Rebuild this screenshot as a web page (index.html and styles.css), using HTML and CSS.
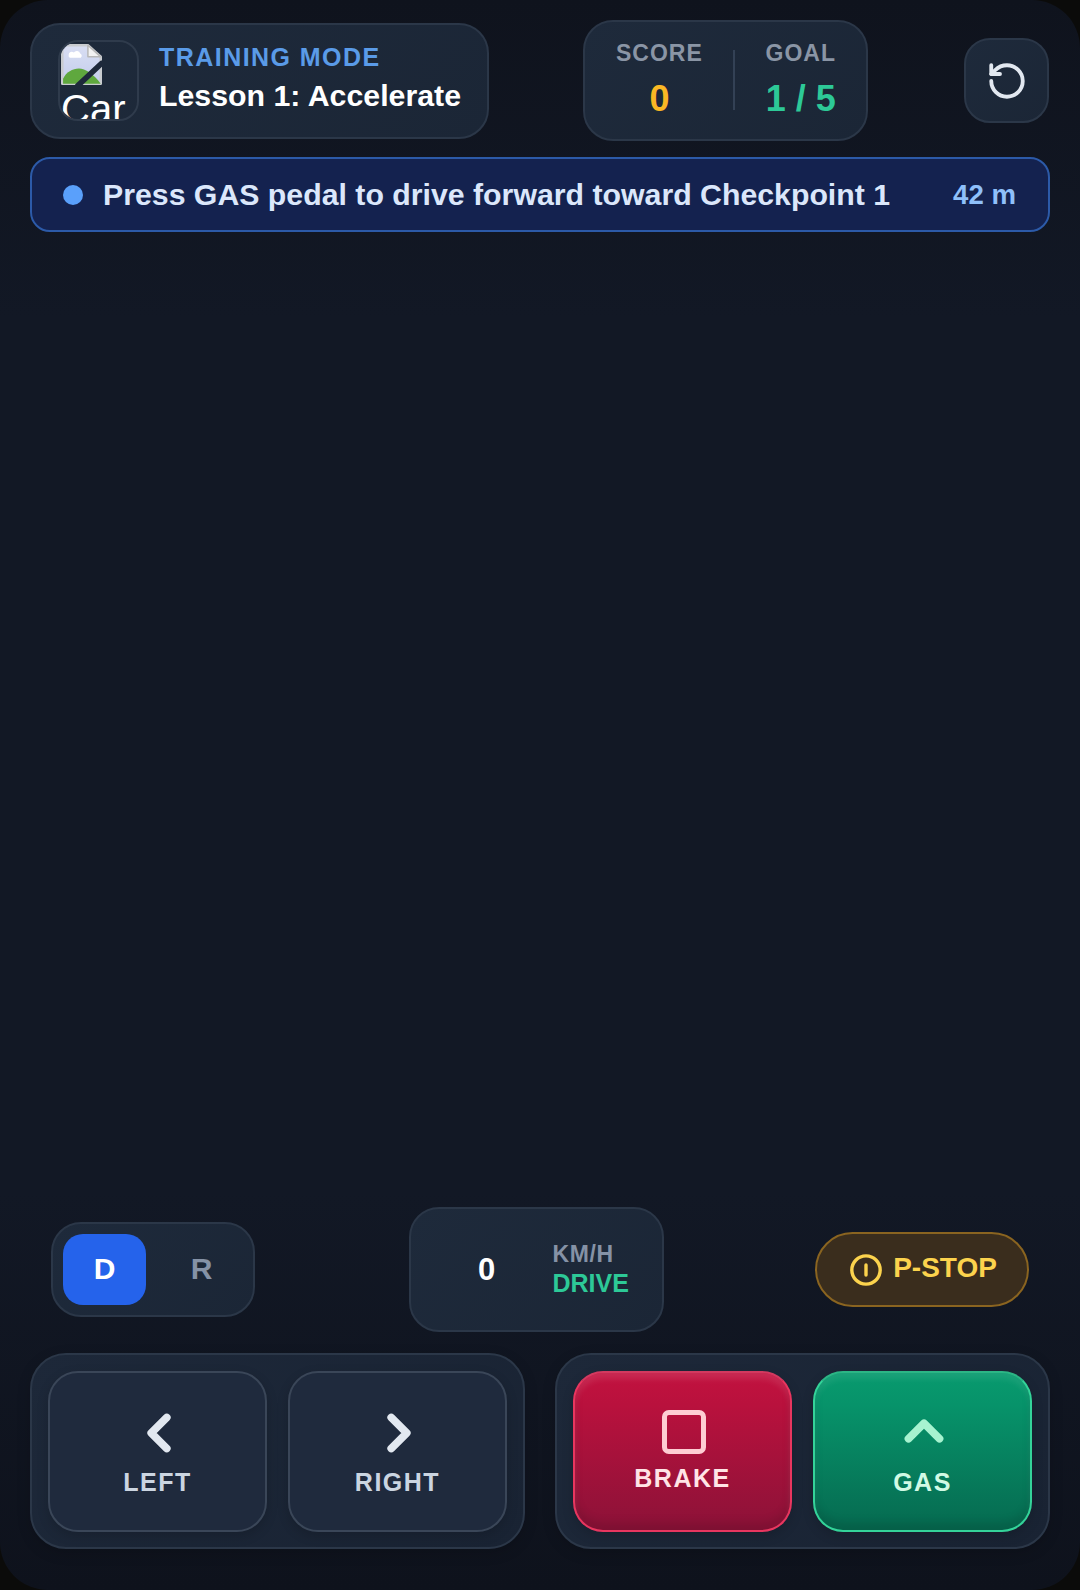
FILE: index.html
```html
<!DOCTYPE html>
<html lang="en">
<head>
<meta charset="utf-8">
<title>Driving Trainer</title>
<link rel="stylesheet" href="styles.css">
</head>
<body>
<main class="frame">
  <header class="top">
    <section class="panel lesson">
      <div class="logo">
        <svg class="broken" viewBox="0 0 16 16" aria-hidden="true">
          <defs><linearGradient id="sky" x1="0" y1="0" x2="0" y2="1"><stop offset="0" stop-color="#d8def3"/><stop offset="1" stop-color="#c4cdec"/></linearGradient></defs>
          <path d="M1.5.5H10.5L15.5 5V15.5H.5V1.5A1 1 0 0 1 1.5.5Z" fill="url(#sky)" stroke="#c9ccd0"/>
          <path d="M10.5.5V5H15.5Z" fill="#f2f2f2" stroke="#b8b8b8" stroke-width=".6"/>
          <path d="M3 4.2a1.2 1.2 0 0 1 2-.9 1.4 1.4 0 0 1 2.5.4 1 1 0 0 1 .2 1.7H3.4A1.1 1.1 0 0 1 3 4.2Z" fill="#fff"/>
          <path d="M.8 15.5V13.6C2 11 4.5 9.6 7 9.6s5.5 2 8.5 5.9Z" fill="#5fa83e"/>
          <path d="M6.6 16.2 15.8 7.6" stroke="#1e293b" stroke-width="2.2"/>
        </svg>
        <span class="logo-alt">Car</span>
      </div>
      <div class="lesson-text">
        <div class="mode">TRAINING MODE</div>
        <div class="lesson-name">Lesson 1: Accelerate</div>
      </div>
    </section>
    <section class="panel stats">
      <div class="stat">
        <div class="stat-label">SCORE</div>
        <div class="stat-value amber">0</div>
      </div>
      <div class="stat-divider"></div>
      <div class="stat">
        <div class="stat-label">GOAL</div>
        <div class="stat-value green">1 / 5</div>
      </div>
    </section>
    <button class="panel reset" aria-label="Restart">
      <svg class="icon-reset" viewBox="0 0 24 24"><path d="M3 12a9 9 0 1 0 9-9 9.75 9.75 0 0 0-6.74 2.74L3 8"/><path d="M3 3v5h5"/></svg>
    </button>
  </header>

  <div class="banner">
    <span class="dot"></span>
    <span class="banner-text">Press GAS pedal to drive forward toward Checkpoint 1</span>
    <span class="distance">42 m</span>
  </div>

  <div class="road"></div>

  <div class="dash">
    <div class="panel gears">
      <button class="gear gear-on">D</button>
      <button class="gear">R</button>
    </div>
    <div class="panel speed">
      <div class="speed-num">0</div>
      <div class="speed-meta">
        <div class="unit">KM/H</div>
        <div class="mode-drive">DRIVE</div>
      </div>
    </div>
    <button class="pstop">
      <svg class="icon-stop" viewBox="0 0 24 24"><circle cx="12" cy="12" r="10"/><path d="M12 8.5v7"/></svg>
      <span class="pstop-text">P-STOP</span>
    </button>
  </div>

  <div class="controls">
    <div class="panel pad">
      <button class="ctl ctl-dark">
        <svg class="icon-chev" viewBox="0 0 24 24"><path d="m15 18-6-6 6-6"/></svg>
        <span>LEFT</span>
      </button>
      <button class="ctl ctl-dark">
        <svg class="icon-chev" viewBox="0 0 24 24"><path d="m9 18 6-6-6-6"/></svg>
        <span>RIGHT</span>
      </button>
    </div>
    <div class="panel pad">
      <button class="ctl ctl-brake">
        <svg class="icon-square" viewBox="0 0 24 24"><rect x="3" y="3" width="18" height="18" rx="2"/></svg>
        <span>BRAKE</span>
      </button>
      <button class="ctl ctl-gas">
        <svg class="icon-up" viewBox="0 0 24 24"><path d="m18 15-6-6-6 6"/></svg>
        <span>GAS</span>
      </button>
    </div>
  </div>
</main>
</body>
</html>
```
FILE: styles.css
```css
* { box-sizing: border-box; }
html, body { margin: 0; padding: 0; background: #0b0b0a; }
body { width: 1080px; height: 1590px; overflow: hidden; font-family: "Liberation Sans", Arial, sans-serif; }
button { font-family: inherit; padding: 0; margin: 0; cursor: pointer; }
svg { display: block; fill: none; stroke-linecap: round; stroke-linejoin: round; }

.frame {
  width: 1080px; height: 1590px; border-radius: 48px; overflow: hidden;
  display: flex; flex-direction: column;
  padding: 20px 30px 41px 30px;
  background: linear-gradient(180deg, #0f131d 0%, #121825 20%, #121825 75%, #0e121c 100%);
}
.panel {
  background: linear-gradient(135deg, #1e2a3b, #1b2636);
  border: 2px solid #2b3748;
}

/* header */
.top { display: flex; align-items: center; justify-content: space-between; height: 121px; flex: none; }
.lesson {
  width: 459px; height: 116px; border-radius: 30px;
  display: flex; align-items: center; gap: 20px; padding: 0 26px;
}
.logo {
  width: 81px; height: 81px; flex: none; overflow: hidden;
  border: 2px solid #2f3b4c; border-radius: 20px;
  color: #fff; font-size: 40px; line-height: 46px;
}
.broken { width: 41px; height: 41px; margin: 2px 0 1px 1px; }
.logo-alt { display: block; margin: 1px 0 0 1px; }
.lesson-text { display: flex; flex-direction: column; gap: 5px; padding-bottom: 5px; }
.mode { font-size: 25px; line-height: 30px; font-weight: 700; letter-spacing: 1.45px; color: #5a9be8; }
.lesson-name { font-size: 30.3px; line-height: 38px; font-weight: 700; color: #fff; }

.stats {
  width: 285px; height: 121px; border-radius: 30px; margin-right: 2px;
  display: flex; align-items: center; justify-content: space-between; padding: 0 30px 1px 31px;
}
.stat { display: flex; flex-direction: column; align-items: center; gap: 12px; }
.stat-label { font-size: 23px; line-height: 26px; font-weight: 700; letter-spacing: 1px; color: #8a95a5; }
.stat-value { font-size: 36px; line-height: 42px; font-weight: 700; }
.amber { color: #fbb824; }
.green { color: #2dc997; }
.stat-divider { width: 2px; height: 60px; background: #334155; }

.reset {
  width: 85px; height: 85px; border-radius: 26px; margin-right: 1px;
  display: flex; align-items: center; justify-content: center;
}
.icon-reset { width: 42px; height: 42px; stroke: #e2e8f0; stroke-width: 2.2; }

/* banner */
.banner {
  margin-top: 16px; height: 75px; flex: none;
  display: flex; align-items: center; padding: 0 32px 0 31px;
  border: 2px solid #2c5aa8; border-radius: 20px;
  background: #14224f;
}
.dot { width: 20px; height: 20px; border-radius: 50%; background: #5aa0fb; flex: none; }
.banner-text { margin-left: 20px; flex: 1; font-size: 30.27px; font-weight: 700; color: #dbe7fb; }
.distance { font-size: 27.6px; font-weight: 700; color: #8fc0fa; }

.road { flex: 1; }

/* dashboard */
.dash { display: flex; align-items: center; justify-content: space-between; height: 125px; flex: none; padding: 0 21px 0 21px; }
.gears {
  width: 204px; height: 95px; border-radius: 30px;
  display: flex; align-items: center; gap: 14px; padding: 0 10px 1px;
}
.gear {
  width: 83px; height: 71px; border: 0; border-radius: 20px; background: transparent;
  font-size: 30px; font-weight: 700; color: #8592a6;
}
.gear-on { background: #2563eb; color: #fff; }
.speed {
  width: 255px; height: 125px; border-radius: 30px; margin-left: 2px;
  display: flex; align-items: center; padding: 0 0 0 53px;
}
.speed-num { width: 46px; text-align: center; font-size: 31px; font-weight: 700; color: #fff; }
.speed-meta { margin-left: 43px; display: flex; flex-direction: column; margin-bottom: 2px; }
.unit { font-size: 23px; line-height: 28px; font-weight: 700; letter-spacing: .6px; color: #8592a6; }
.mode-drive { font-size: 25px; line-height: 30px; font-weight: 700; color: #2dc997; }
.pstop {
  width: 214px; height: 75px; border-radius: 38px;
  display: flex; align-items: center; justify-content: center; gap: 10px; padding-left: 2px;
  background: #3a2d1d; border: 2px solid #8a6420;
  font-size: 28px; font-weight: 700; color: #fcd34d;
}
.pstop-text { margin-top: -3px; }
.icon-stop { width: 34px; height: 34px; stroke: #fcd34d; stroke-width: 2.4; }

/* controls */
.controls { margin-top: 21px; display: flex; justify-content: space-between; flex: none; }
.pad {
  width: 495px; height: 196px; border-radius: 36px;
  display: flex; align-items: center; justify-content: space-between; padding: 0 16px;
  background: linear-gradient(135deg, #1d2839, #192333);
  box-shadow: 0 4px 14px rgba(0, 0, 0, .15);
}
.ctl {
  width: 219px; height: 161px; border-radius: 30px;
  display: flex; flex-direction: column; align-items: center; justify-content: center;
  font-size: 25px; line-height: 30px; font-weight: 700; letter-spacing: 1.5px;
  box-shadow: 0 4px 12px rgba(0, 0, 0, .16);
}
.ctl-dark { background: #1f2a3d; border: 2px solid #3a4658; color: #cbd5e1; padding-bottom: 4px; }
.ctl-brake {
  background: linear-gradient(180deg, #c2123f 0%, #b9113d 20%, #8c1238 100%);
  border: 2px solid #e8365f; border-top-color: #d2395f; color: #ffe4e6; padding-bottom: 4px;
  box-shadow: inset 0 6px 6px rgba(255, 255, 255, .1), inset 0 -8px 8px rgba(0, 0, 0, .1), 0 4px 12px rgba(0, 0, 0, .16);
}
.ctl-gas {
  background: linear-gradient(180deg, #089a6e 0%, #07936a 20%, #066a50 100%);
  border: 2px solid #34d399; border-top-color: #2cb585; color: #d1fae5;
  box-shadow: inset 0 6px 6px rgba(255, 255, 255, .08), inset 0 -8px 8px rgba(0, 0, 0, .1), 0 4px 12px rgba(0, 0, 0, .16);
}
.icon-chev { width: 62px; height: 62px; stroke: #e2e8f0; stroke-width: 3; margin: 0 0 3px 3px; }
.icon-square { width: 52px; height: 52px; stroke: #fecdd3; stroke-width: 2.3; margin: 0 0 5px 2px; }
.icon-up { width: 62px; height: 62px; stroke: #a7f3d0; stroke-width: 3; margin: -5px 0 5px 2px; }
```
